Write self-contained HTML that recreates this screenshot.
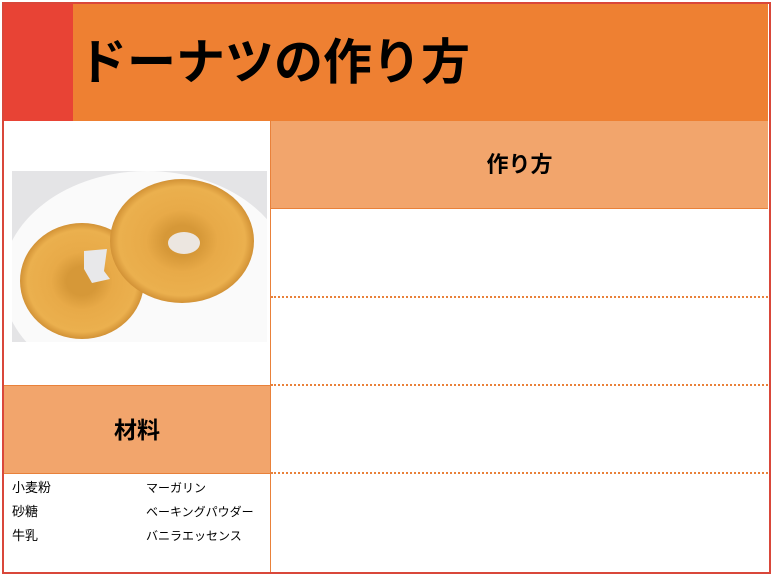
<!DOCTYPE html>
<html><head><meta charset="utf-8"><style>
*{margin:0;padding:0;box-sizing:border-box}
body{width:773px;height:576px;background:#fff;position:relative;overflow:hidden;font-family:"Liberation Sans","Noto Sans CJK JP",sans-serif}
.a{position:absolute}
</style></head><body>
<div class="a" style="left:2px;top:2px;width:769px;height:572px;border:2px solid #d9473a"></div>
<div class="a" style="left:4px;top:4px;width:69px;height:117px;background:#e84335"></div>
<div class="a" style="left:73px;top:4px;width:695px;height:117px;background:#ee8032"></div>
<div class="a" style="left:78px;top:28px;font-size:49px;font-weight:bold;color:#000;line-height:70px">ドーナツの作り方</div>
<div class="a" style="left:271px;top:121px;width:497px;height:88px;background:#f2a56c;border-bottom:1px solid #e9813a"></div>
<div class="a" style="left:271px;top:145px;width:497px;text-align:center;font-size:22px;font-weight:bold;line-height:40px">作り方</div>
<div class="a" style="left:270px;top:121px;width:1px;height:451px;background:#e9813a"></div>
<div class="a" style="left:271px;top:296px;width:497px;border-top:2px dotted #e9813a"></div>
<div class="a" style="left:271px;top:384px;width:497px;border-top:2px dotted #e9813a"></div>
<div class="a" style="left:271px;top:472px;width:497px;border-top:2px dotted #e9813a"></div>
<div class="a" style="left:4px;top:385px;width:266px;height:89px;background:#f2a56c;border-top:1px solid #e9813a;border-bottom:1px solid #e9813a"></div>
<div class="a" style="left:4px;top:410px;width:266px;text-align:center;font-size:23px;font-weight:bold;line-height:40px">材料</div>
<div class="a" style="left:12px;top:476px;font-size:13px;line-height:24px">小麦粉<br>砂糖<br>牛乳</div>
<div class="a" style="left:146px;top:476px;font-size:12px;line-height:24px">マーガリン<br>ベーキングパウダー<br>バニラエッセンス</div>
<svg class="a" style="left:12px;top:171px" width="255" height="171" viewBox="0 0 255 171">
<defs>
<radialGradient id="d" cx="50%" cy="50%" r="50%"><stop offset="0.25" stop-color="#d69838"/><stop offset="0.5" stop-color="#e8aa48"/><stop offset="0.88" stop-color="#ebb04e"/><stop offset="1" stop-color="#d29236"/></radialGradient>
</defs>
<rect width="255" height="171" fill="#e4e4e6"/>
<ellipse cx="135" cy="110" rx="145" ry="110" fill="#fafafa"/>
<ellipse cx="70" cy="110" rx="62" ry="58" fill="url(#d)"/>
<path d="M72 80 L95 78 L92 100 L98 108 L80 112 L72 98 Z" fill="#e8e8ea"/>
<ellipse cx="170" cy="70" rx="72" ry="62" fill="url(#d)"/>
<ellipse cx="172" cy="72" rx="16" ry="11" fill="#ece6e0"/>
</svg>
</body></html>
